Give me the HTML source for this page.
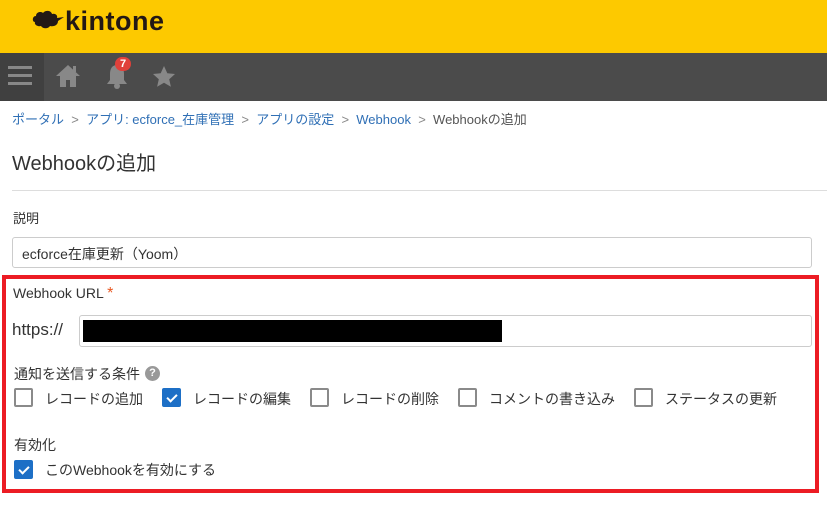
<!DOCTYPE html>
<html><head><meta charset="utf-8"><style>
*{box-sizing:border-box;margin:0;padding:0}
body{width:827px;height:507px;overflow:hidden;background:#fff;font-family:"Liberation Sans","Noto Sans CJK JP",sans-serif;color:#333;position:relative}
.a{position:absolute;white-space:nowrap}
.cb{position:absolute;width:19px;height:19px;border:2px solid #8a8a8a;border-radius:2px;background:#fff}
.cb.on{background:#1d6fc6;border-color:#1d6fc6}
.cb.on:after{content:"";position:absolute;left:5px;top:2px;width:4px;height:8px;border:solid #fff;border-width:0 2px 2px 0;transform:rotate(45deg)}
.lb{font-size:14px;color:#333}
</style></head><body>
<div class="a" style="left:0;top:0;width:827px;height:53px;background:#fdc900"></div>
<svg class="a" style="left:31px;top:9px" width="34" height="24" viewBox="0 0 34 22"><path d="M4 12c-3 0-3-6 1-6 0-4 5-5 7-3 2-3 8-3 9 1 3-1 6 1 5 4l7-1-6 4c0 4-4 6-8 5-2 3-7 3-9 0-4 1-7-2-6-4z" fill="#231815"/></svg>
<div class="a" style="left:65px;top:6px;font-size:27px;font-weight:bold;color:#231815;letter-spacing:0.5px">kintone</div>
<div class="a" style="left:0;top:53px;width:827px;height:48px;background:#4b4b4b"></div>
<div class="a" style="left:0;top:53px;width:44px;height:48px;background:#404040"></div>
<div class="a" style="left:8px;top:66px;width:24px;height:3px;background:#888;box-shadow:0 8px 0 #888,0 16px 0 #888"></div>
<svg class="a" style="left:55px;top:64px" width="26" height="24" viewBox="0 0 26 24"><path d="M13 1L1 12h4v11h6v-7h4v7h6V12h4z" fill="#888"/><rect x="18" y="2" width="3" height="6" fill="#888"/></svg>
<svg class="a" style="left:104px;top:62px" width="26" height="28" viewBox="0 0 26 28"><path d="M13 3c-5 0-7 4-7 9v6l-3 4h20l-3-4v-6c0-5-2-9-7-9z" fill="#888"/><circle cx="13" cy="24" r="3" fill="#888"/></svg>
<div class="a" style="left:115px;top:57px;width:16px;height:14px;border-radius:7px;background:#e0403a;color:#fff;font-size:11px;font-weight:bold;text-align:center;line-height:14px">7</div>
<svg class="a" style="left:151px;top:65px" width="26" height="24" viewBox="0 0 24 24"><path d="M12 1l3.3 7.2 7.7.8-5.8 5.2 1.7 7.6L12 17.8l-6.9 4 1.7-7.6L1 9l7.7-.8z" fill="#888"/></svg>
<div class="a" style="left:12px;top:109px;font-size:13px;color:#2f6fb5">ポータル <span style="color:#888">&nbsp;&gt;&nbsp;</span> アプリ: ecforce_在庫管理 <span style="color:#888">&nbsp;&gt;&nbsp;</span> アプリの設定 <span style="color:#888">&nbsp;&gt;&nbsp;</span> Webhook <span style="color:#888">&nbsp;&gt;&nbsp;</span> <span style="color:#555">Webhookの追加</span></div>
<div class="a" style="left:12px;top:147px;font-size:20px;color:#333">Webhookの追加</div>
<div class="a" style="left:12px;top:190px;width:815px;height:1px;background:#ddd"></div>
<div class="a lb" style="left:13px;top:208px;font-size:13px">説明</div>
<div class="a" style="left:12px;top:237px;width:800px;height:31px;border:1px solid #ccc;border-radius:3px;font-size:14px;padding:6px 9px">ecforce在庫更新（Yoom）</div>
<div class="a" style="left:2px;top:275px;width:817px;height:218px;border:4px solid #ec1c24"></div>
<div class="a lb" style="left:13px;top:285px">Webhook URL <span style="color:#e8551e;font-size:16px">*</span></div>
<div class="a" style="left:12px;top:320px;font-size:17px">https://</div>
<div class="a" style="left:79px;top:315px;width:733px;height:32px;border:1px solid #ccc;border-radius:3px"></div>
<div class="a" style="left:83px;top:320px;width:419px;height:22px;background:#000"></div>
<div class="a lb" style="left:14px;top:364px">通知を送信する条件</div>
<div class="a" style="left:145px;top:366px;width:15px;height:15px;border-radius:50%;background:#999;color:#fff;font-size:11px;font-weight:bold;text-align:center;line-height:15px">?</div>
<div class="cb" style="left:14px;top:388px"></div><div class="a lb" style="left:45px;top:389px">レコードの追加</div>
<div class="cb on" style="left:162px;top:388px"></div><div class="a lb" style="left:193px;top:389px">レコードの編集</div>
<div class="cb" style="left:310px;top:388px"></div><div class="a lb" style="left:341px;top:389px">レコードの削除</div>
<div class="cb" style="left:458px;top:388px"></div><div class="a lb" style="left:489px;top:389px">コメントの書き込み</div>
<div class="cb" style="left:634px;top:388px"></div><div class="a lb" style="left:665px;top:389px">ステータスの更新</div>
<div class="a lb" style="left:14px;top:435px">有効化</div>
<div class="cb on" style="left:14px;top:460px"></div><div class="a lb" style="left:45px;top:460px">このWebhookを有効にする</div>
</body></html>
